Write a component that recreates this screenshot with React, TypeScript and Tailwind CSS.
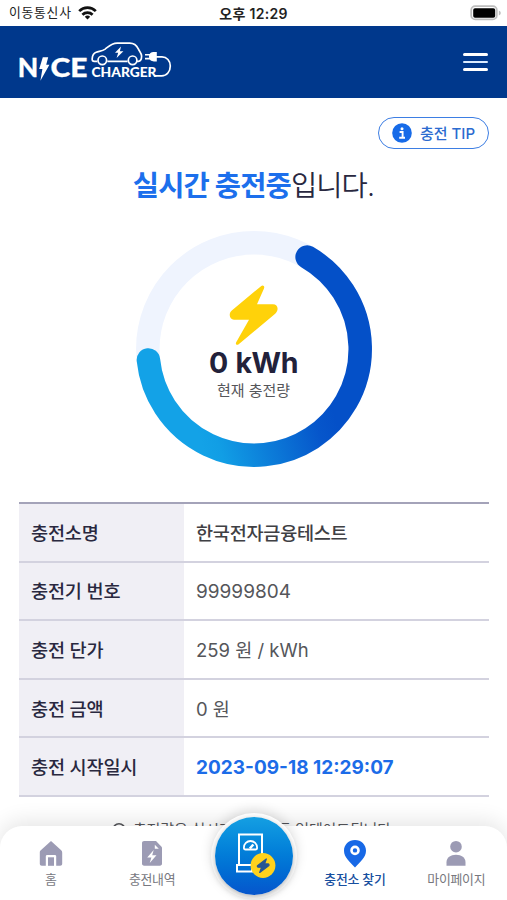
import React from "react";
import clsx from "clsx";

interface InfoRow {
  label: string;
  value: string;
  valueClass: string;
}

const rows: InfoRow[] = [
  { label: "충전소명", value: "한국전자금융테스트", valueClass: "font-medium text-[#3f4044] text-[18.6px] tracking-[-0.015em]" },
  { label: "충전기 번호", value: "99999804", valueClass: "text-[#55565a] text-[19px]" },
  { label: "충전 단가", value: "259 원 / kWh", valueClass: "text-[#55565a] text-[18.5px]" },
  { label: "충전 금액", value: "0 원", valueClass: "text-[#55565a] text-[18.5px]" },
  { label: "충전 시작일시", value: "2023-09-18 12:29:07", valueClass: "font-bold text-[#1c6ce8] text-[19px]" },
];

const StatusBar: React.FC = () => (
  <div className="grid h-[26px] grid-cols-3 items-center bg-white px-[9px] text-[13px] text-[#222]">
    <div className="flex items-center gap-[6px]">
      <span className="tracking-[0.06em] text-[12.8px]">이동통신사</span>
      <svg className="h-[14px] w-[19px]" viewBox="0 0 19 14" fill="none" stroke="#111" strokeWidth="2.7">
        <path d="M1.2 5.1a11.8 11.8 0 0 1 16.6 0" />
        <path d="M4.4 8.7a7.3 7.3 0 0 1 10.2 0" />
        <path d="M9.5 13.6l-2.7-2.8a3.9 3.9 0 0 1 5.4 0z" fill="#111" stroke="none" />
      </svg>
    </div>
    <span className="text-center text-[14px] font-semibold tracking-[0.02em]">오후 12:29</span>
    <svg className="mr-[-4px] h-[16px] w-[32px] justify-self-end" viewBox="0 0 32 16">
      <rect x="1.2" y="1.2" width="25.6" height="13.2" rx="4" fill="#fff" stroke="#bdbdbd" strokeWidth="1.8" />
      <rect x="3.2" y="3.2" width="22" height="9.6" rx="1.8" fill="#000" />
      <path d="M28.8 5.4c2.6.8 2.6 4.2 0 5z" fill="#bdbdbd" />
    </svg>
  </div>
);

const Logo: React.FC = () => (
  <svg className="h-[40px] w-[156px]" viewBox="0 0 156 40" fill="none" stroke="#fff">
    <g fill="#fff" stroke="#fff" strokeWidth="0.3" fontFamily="Lato, sans-serif" fontWeight="900">
      <text x="-1.2" y="34.8" fontSize="27" textLength="20.5" lengthAdjust="spacingAndGlyphs">N</text>
      <text x="31.5" y="34.8" fontSize="27" textLength="37" lengthAdjust="spacingAndGlyphs">CE</text>
      <text x="72.5" y="35" fontSize="13.6" strokeWidth="0" textLength="65" lengthAdjust="spacingAndGlyphs">CHARGER</text>
    </g>
    <path d="M23.8 15.3h5.4l-2 7.5h3.2l-9 16 2-11.7h-3.2z" fill="#fff" stroke="none" />
    <g transform="translate(0 -1.4)">
      <path
        d="M78.4 20.7h-3c-1.9 0-2.4-.9-2.2-2.7.2-3.2.8-5.2 4-6.3 3.2-1.1 6.2-1.2 9-3.2 3.3-2.5 6.3-6 12-6h12.5c4.5 0 6.8 2 8.6 5.8 1.2 2.7 3.3 4.1 3.3 7.2 0 3.6-.6 5.2-3.2 5.2h-1.7M88.3 20.7h20.3"
        strokeWidth="1.7"
      />
      <circle cx="83.3" cy="19.7" r="4.3" strokeWidth="1.7" />
      <circle cx="113.6" cy="19.7" r="4.3" strokeWidth="1.7" />
      <path d="M102 5.8l-6 6.3h3.2l-1.6 5.2 6.8-6.7h-3.5z" fill="#fff" stroke="none" />
      <path d="M126 14.2h5M126 18h5" strokeWidth="1.6" />
      <path d="M130 16.2c0-3.4 2.3-4.8 5-4.8h2.8v9.4H135c-2.7 0-5-1.4-5-4.6z" fill="#fff" stroke="none" />
      <path d="M137 16.2h6c4.8 0 8.3 4.1 8.3 9.2 0 5.6-3.6 9.9-8.6 9.9h-7.4" strokeWidth="1.7" />
    </g>
  </svg>
);

const Header: React.FC = () => (
  <header className="flex h-[72px] items-center justify-between bg-[#00388c] px-[19px]">
    <Logo />
    <button className="flex w-[25px] flex-col gap-[5px]" aria-label="메뉴">
      <span className="h-[2.5px] rounded-full bg-white" />
      <span className="h-[2.5px] rounded-full bg-[#dcecff]" />
      <span className="h-[2.5px] rounded-full bg-white" />
    </button>
  </header>
);

const ChargeRing: React.FC = () => (
  <div className="mx-auto mt-[25px] grid size-[236px]">
    <svg className="col-start-1 row-start-1 size-[236px]" viewBox="0 0 236 236" fill="none">
      <defs>
        <linearGradient id="ring" gradientUnits="userSpaceOnUse" x1="60" y1="196" x2="190" y2="156">
          <stop offset="0" stopColor="#13a2e7" />
          <stop offset="0.12" stopColor="#119ee5" />
          <stop offset="0.85" stopColor="#0656cb" />
          <stop offset="1" stopColor="#0450c8" />
        </linearGradient>
      </defs>
      <circle cx="118" cy="118" r="106.2" stroke="#eff4fe" strokeWidth="23.5" />
      <path d="M171.1 26A106.2 106.2 0 1 1 12.4 129" stroke="url(#ring)" strokeWidth="23.5" strokeLinecap="round" />
    </svg>
    <div className="col-start-1 row-start-1 flex flex-col items-center pt-[54px]">
      <svg className="h-[60px] w-[50px]" viewBox="0 0 50 60" fill="#ffd20a">
        <path d="M32 1.2 2.8 25.5C-.8 28.6.5 34.7 5 34.7h15L7.2 57.3c-1.1 2.1.8 3.3 2.5 1.9l36.5-30.5c4-3.4 2.8-9.4-2.3-9.4H28l7-15.9C36 1.2 33.9-.4 32 1.2z" />
      </svg>
      <strong className="mt-[1px] text-[28.5px] leading-[34px] font-bold tracking-[-0.015em] [word-spacing:1.5px] text-[#22213a]">
        0 kWh
      </strong>
      <span className="mt-[1px] text-[15px] leading-[20px] text-[#55565a]">현재 충전량</span>
    </div>
  </div>
);

const InfoTable: React.FC = () => (
  <dl className="mr-[18px] ml-[19px] mt-[35px] border-t-[2.5px] border-[#a4a3b9]">
    {rows.map((row) => (
      <div key={row.label} className="flex h-[58.6px] border-b-2 border-[#d3d2df]">
        <dt className="flex w-[165px] items-center bg-[#f0eff5] pt-[3px] pl-[12px] text-[18.6px] font-medium tracking-[-0.01em] text-[#29283f]">
          {row.label}
        </dt>
        <dd className={clsx("flex items-center pt-[3px] pl-[12px]", row.valueClass)}>{row.value}</dd>
      </div>
    ))}
  </dl>
);

const HomeIcon: React.FC = () => (
  <svg className="h-[28px] w-[24px]" viewBox="0 0 24 28" fill="#9c9bb4">
    <path d="M12 1 1.8 10.3C1 11 .8 11.7.8 12.7v11.1c0 1.3.8 2 2 2h4v-9.2c0-1 .5-1.5 1.5-1.5h7.4c1 0 1.5.5 1.5 1.5v9.2h4c1.2 0 2-.7 2-2V12.7c0-1-.3-1.7-1-2.4z" />
    <path d="M9 17.3h6v8.5H9z" />
  </svg>
);

const HistoryIcon: React.FC = () => (
  <svg className="h-[28px] w-[24px]" viewBox="0 0 24 28">
    <path d="M4.2 1H16l6 6.2v16.3c0 1.4-.8 2.2-2.2 2.2H4.2c-1.4 0-2.2-.8-2.2-2.2V3.2C2 1.8 2.8 1 4.2 1z" fill="#9c9bb4" />
    <path d="M14.8 4.7v4h4zM13.7 10l-6.5 7.5h4.2L9.7 23l6.8-7.7h-4.3z" fill="#fff" />
  </svg>
);

const PinIcon: React.FC = () => (
  <svg className="h-[28px] w-[24px]" viewBox="0 0 24 28">
    <path d="M12 0C5.7 0 1 4.7 1 10.7 1 17.4 7 22 12 27.5c5-5.5 11-10.1 11-16.8C23 4.7 18.3 0 12 0z" fill="#1768e6" />
    <circle cx="12" cy="10.4" r="3.5" fill="none" stroke="#fff" strokeWidth="2.6" />
  </svg>
);

const PersonIcon: React.FC = () => (
  <svg className="h-[28px] w-[24px]" viewBox="0 0 24 28" fill="#9c9bb4">
    <circle cx="12" cy="6.7" r="5.8" />
    <path d="M2.5 25.7v-3.4c0-4.6 4-7.5 9.5-7.5s9.5 2.9 9.5 7.5v3.4z" />
  </svg>
);

interface NavItemProps {
  label: string;
  icon: React.ReactNode;
  active?: boolean;
}

const NavItem: React.FC<NavItemProps> = ({ label, icon, active }) => (
  <a className="flex flex-1 flex-col items-center gap-[3px] pt-[14px]">
    {icon}
    <span
      className={clsx(
        "text-[12.9px] leading-[18px] tracking-[-0.02em] whitespace-nowrap",
        active ? "font-medium text-[#174f9f]" : "text-[#77777e]"
      )}
    >
      {label}
    </span>
  </a>
);

const ChargeButton: React.FC = () => (
  <button
    className="absolute top-[-13px] left-1/2 flex size-[86px] -translate-x-1/2 items-center justify-center rounded-full bg-white shadow-[0_-3px_12px_rgba(0,0,0,0.13)]"
    aria-label="충전"
  >
    <span className="flex size-[78px] items-center justify-center rounded-full bg-linear-to-b from-[#159fe2] to-[#0755cc] shadow-[0_2px_6px_rgba(0,0,0,0.3)]">
      <svg className="size-[46px]" viewBox="0 0 46 46" fill="none" stroke="#fff" strokeWidth="2">
        <path d="M8 32V1.5h23V24M8 32h15M6 32h15v6.5H6z" />
        <path d="M14.6 16.5c-1.1 0-1.7-.7-1.7-1.8 0-4 3-6.7 6.6-6.7s6.6 2.7 6.6 6.7c0 1.1-.6 1.8-1.7 1.8z" strokeWidth="1.8" />
        <path d="m18.8 15.5 3.6-4" strokeWidth="2.5" />
        <circle cx="32" cy="32.5" r="12.4" fill="#ffd21d" stroke="none" />
        <path d="m35.3 26-8.5 6.5c-.8.7-.4 1.7.5 1.7h3.4l-2 5.2 8.9-6.6c.8-.7.4-1.8-.6-1.8h-3.5z" fill="#275593" stroke="#275593" strokeWidth="1.3" strokeLinejoin="round" />
      </svg>
    </span>
  </button>
);

const BottomNav: React.FC = () => (
  <nav className="absolute inset-x-0 bottom-0 h-[74px] rounded-t-[22px] bg-white shadow-[0_-4px_22px_rgba(0,0,0,0.11)]">
    <div className="flex h-full">
      <NavItem label="홈" icon={<HomeIcon />} />
      <NavItem label="충전내역" icon={<HistoryIcon />} />
      <span className="flex-1" />
      <NavItem label="충전소 찾기" icon={<PinIcon />} active />
      <NavItem label="마이페이지" icon={<PersonIcon />} />
    </div>
    <ChargeButton />
  </nav>
);

const App: React.FC = () => (
  <div className="relative h-[900px] w-full overflow-hidden bg-white font-[Inter,'Noto_Sans_CJK_KR',sans-serif]">
    <StatusBar />
    <Header />
    <main>
      <div className="flex justify-end pt-[19px] pr-[18px]">
        <button className="flex h-[32px] w-[111px] items-center justify-center gap-[8px] rounded-full border-[1.5px] border-[#3d7ee3] text-[15px] font-medium text-[#2c6bd0]">
          <svg className="size-[20px]" viewBox="0 0 20 20">
            <circle cx="10" cy="10" r="9.8" fill="#176be8" />
            <circle cx="10" cy="5.7" r="1.5" fill="#fff" />
            <path d="M7.6 9h3v5.6M7.2 14.8h5.8" fill="none" stroke="#fff" strokeWidth="1.9" />
          </svg>
          <span className="pt-[2px]">충전 TIP</span>
        </button>
      </div>
      <h1 className="mt-[17px] text-center text-[28.5px] leading-[40px] font-[350] tracking-[-0.03em] text-[#29283f]">
        <b className="font-bold text-[#1c6fec]">실시간 충전중</b>입니다.
      </h1>
      <ChargeRing />
      <InfoTable />
      <p className="mt-[22px] flex items-center justify-center gap-[7px] text-[15px] leading-[22px] tracking-[-0.01em] text-[#55565a]">
        <svg className="size-[14px]" viewBox="0 0 14 14" fill="none" stroke="#55565a" strokeWidth="1.5">
          <circle cx="7" cy="7" r="6.2" />
          <path d="M7 6v5M7 3v1.5" />
        </svg>
        충전량은 실시간으로 자동 업데이트됩니다.
      </p>
    </main>
    <BottomNav />
  </div>
);

export default App;
